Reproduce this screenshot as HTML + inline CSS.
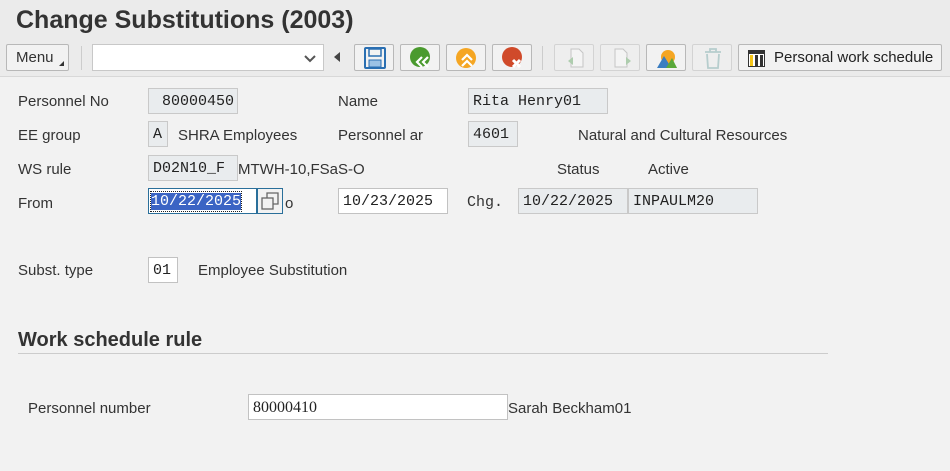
<!DOCTYPE html>
<html><head><style>
*{margin:0;padding:0;box-sizing:border-box}
body{width:950px;height:471px;background:#f2f2f2;font-family:"Liberation Sans",Arial,sans-serif;font-size:15px;color:#333;position:relative;overflow:hidden}
.a{position:absolute}
.hdr{left:0;top:0;width:950px;height:77px;background:#ebebeb;border-bottom:1px solid #d8d8d8}
.t{left:16px;top:6px;font-size:25px;font-weight:bold;color:#333}
.btn{position:absolute;top:44px;height:27px;border:1px solid #b8b8b8;background:#f2f2f2;border-radius:2px}
.lbl{position:absolute;font-size:15px;color:#333;line-height:16px;margin-top:1px}
.ro{position:absolute;height:26px;background:#e9ecee;border:1px solid #c9c9c9;font-family:"Liberation Mono",monospace;font-size:15px;color:#222;padding:4px 0 0 4px}
.in{position:absolute;height:26px;background:#fff;border:1px solid #c2c2c2;font-family:"Liberation Mono",monospace;font-size:15px;color:#222;padding:4px 0 0 4px}
.sep{position:absolute;top:46px;width:1px;height:24px;background:#ccc}
</style></head><body>
<div class="a hdr"></div>
<div class="a t">Change Substitutions (2003)</div>
<div class="btn" style="left:6px;width:63px"><span class="a" style="left:9px;top:4px;font-size:15px">Menu</span><span class="a" style="left:52px;top:16px;width:0;height:0;border-left:5px solid transparent;border-bottom:5px solid #333"></span></div>
<div class="sep" style="left:81px"></div>
<div class="a" style="left:92px;top:44px;width:232px;height:27px;background:#fff;border:1px solid #c8c8c8"><svg class="a" style="left:211px;top:10px" width="12" height="8"><path d="M1 1l5 5 5-5" stroke="#555" stroke-width="2" fill="none"/></svg></div>
<div class="a" style="left:334px;top:52px;width:0;height:0;border-top:5px solid transparent;border-bottom:5px solid transparent;border-right:6px solid #444"></div>
<div class="btn" style="left:354px;width:40px"><svg class="a" style="left:9px;top:2px" width="22" height="22"><rect x="1" y="1" width="20" height="20" rx="1" fill="none" stroke="#2a6fb2" stroke-width="2"/><rect x="5" y="2" width="12" height="7" fill="none" stroke="#2a6fb2" stroke-width="1.5"/><rect x="5" y="13" width="12" height="7" fill="#9cc2e5" stroke="#2a6fb2"/></svg></div>
<div class="btn" style="left:400px;width:40px"><svg class="a" style="left:8px;top:1px" width="24" height="24"><circle cx="11" cy="11" r="10" fill="#4a9a2e"/><path d="M13 11l-5 5 5 5M19 11l-5 5 5 5" stroke="#fff" stroke-width="2.2" fill="none"/></svg></div>
<div class="btn" style="left:446px;width:40px"><svg class="a" style="left:8px;top:1px" width="24" height="24"><circle cx="11" cy="12" r="10" fill="#f5a623"/><path d="M7 14l5-5 5 5M7 20l5-5 5 5" stroke="#fff" stroke-width="2.2" fill="none"/></svg></div>
<div class="btn" style="left:492px;width:40px"><svg class="a" style="left:8px;top:1px" width="24" height="24"><circle cx="11" cy="11" r="10" fill="#d04a2a"/><path d="M12 14l7 7M19 14l-7 7" stroke="#fff" stroke-width="3"/></svg></div>
<div class="sep" style="left:542px"></div>
<div class="btn" style="left:554px;width:40px;opacity:.45"><svg class="a" style="left:11px;top:3px" width="20" height="20"><path d="M5 1h8l4 4v14H5z" fill="#fff" stroke="#999"/><path d="M2 13l5-4v8z" fill="#6a6"/></svg></div>
<div class="btn" style="left:600px;width:40px;opacity:.45"><svg class="a" style="left:11px;top:3px" width="20" height="20"><path d="M3 1h8l4 4v14H3z" fill="#fff" stroke="#999"/><path d="M19 13l-5-4v8z" fill="#6a6"/></svg></div>
<div class="btn" style="left:646px;width:40px"><svg class="a" style="left:9px;top:2px" width="22" height="22"><circle cx="12" cy="10" r="7" fill="#f5a623"/><path d="M1 21l7-12 5 8 3-4 5 8z" fill="#3a7dc0"/><path d="M10 21l6-10 5 10z" fill="#5aa83a"/></svg></div>
<div class="btn" style="left:692px;width:40px;opacity:.45"><svg class="a" style="left:10px;top:2px" width="20" height="22"><path d="M2 5h16M7 5V2h6v3M4 7l1 14h10l1-14" fill="none" stroke="#7aa" stroke-width="1.8"/></svg></div>
<div class="btn" style="left:738px;width:204px"><svg class="a" style="left:9px;top:5px" width="17" height="17"><rect x="0.5" y="0.5" width="16" height="16" fill="#fff" stroke="#333"/><rect x="1" y="1" width="15" height="3" fill="#333"/><rect x="2" y="5" width="3" height="11" fill="#f5c518"/><rect x="7" y="5" width="3" height="11" fill="#333"/><rect x="12" y="5" width="3" height="11" fill="#333"/></svg><span class="a" style="left:35px;top:4px;font-size:15px;color:#222">Personal work schedule</span></div>

<div class="lbl" style="left:18px;top:93px">Personnel No</div>
<div class="ro" style="left:148px;top:88px;width:90px;padding-left:13px">80000450</div>
<div class="lbl" style="left:338px;top:93px">Name</div>
<div class="ro" style="left:468px;top:88px;width:140px">Rita Henry01</div>

<div class="lbl" style="left:18px;top:127px">EE group</div>
<div class="ro" style="left:148px;top:121px;width:20px">A</div>
<div class="lbl" style="left:178px;top:127px">SHRA Employees</div>
<div class="lbl" style="left:338px;top:127px">Personnel ar</div>
<div class="ro" style="left:468px;top:121px;width:50px">4601</div>
<div class="lbl" style="left:578px;top:127px">Natural and Cultural Resources</div>

<div class="lbl" style="left:18px;top:161px">WS rule</div>
<div class="ro" style="left:148px;top:155px;width:90px">D02N10_F</div>
<div class="lbl" style="left:238px;top:161px">MTWH-10,FSaS-O</div>
<div class="lbl" style="left:557px;top:161px">Status</div>
<div class="lbl" style="left:648px;top:161px">Active</div>

<div class="lbl" style="left:18px;top:195px">From</div>
<div class="in" style="left:148px;top:188px;width:109px;border-color:#2a6f9a;padding:2px 0 0 1px"><span style="display:inline-block;border:1px dotted #222;padding:1px 0;"><span style="background:#3b64c4;color:#fff">10/22/2025</span></span></div>
<div class="a" style="left:257px;top:188px;width:26px;height:26px;border:1px solid #2a6f9a;background:#f2f2f2"><svg class="a" style="left:3px;top:3px" width="19" height="19"><rect x="1" y="6" width="11" height="11" fill="none" stroke="#666" stroke-width="1.3"/><path d="M6 6V1h11v11h-5" fill="none" stroke="#666" stroke-width="1.3"/></svg></div>
<div class="lbl" style="left:285px;top:195px">o</div>
<div class="in" style="left:338px;top:188px;width:110px">10/23/2025</div>
<div class="a" style="left:467px;top:194px;font-family:'Liberation Mono',monospace;font-size:15px;color:#333">Chg.</div>
<div class="ro" style="left:518px;top:188px;width:110px">10/22/2025</div>
<div class="ro" style="left:628px;top:188px;width:130px">INPAULM20</div>

<div class="lbl" style="left:18px;top:262px">Subst. type</div>
<div class="in" style="left:148px;top:257px;width:30px">01</div>
<div class="lbl" style="left:198px;top:262px">Employee Substitution</div>

<div class="a" style="left:18px;top:329px;font-size:20px;font-weight:bold;color:#333">Work schedule rule</div>
<div class="a" style="left:18px;top:353px;width:810px;height:1px;background:#ccc"></div>

<div class="lbl" style="left:28px;top:400px">Personnel number</div>
<div class="in" style="left:248px;top:394px;width:260px;font-family:'Liberation Serif',serif;font-size:16px">80000410</div>
<div class="lbl" style="left:508px;top:400px">Sarah Beckham01</div>
</body></html>
